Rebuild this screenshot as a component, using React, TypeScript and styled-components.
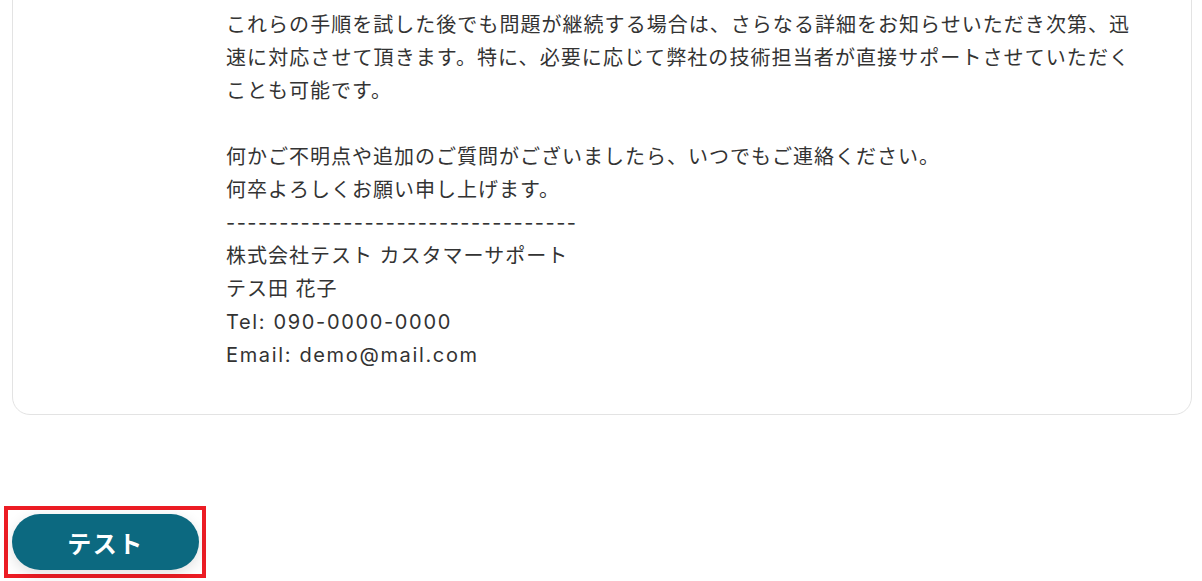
import styled, { createGlobalStyle } from "styled-components";

const GlobalStyle = createGlobalStyle`
  html, body {
    margin: 0;
    padding: 0;
    background: #fff;
    overflow: hidden;
  }
  body {
    font-family: Inter, "Noto Sans CJK JP", sans-serif;
  }
`;

const Page = styled.div`
  width: 1202px;
  height: 581px;
  display: flex;
  flex-direction: column;
  padding: 0 10px 0 12px;
  box-sizing: border-box;
`;

const Card = styled.section`
  margin-top: -24px;
  padding: 32px 61px 42px 213px;
  border: 1px solid #e3e3e3;
  border-radius: 18px;
  background: #fff;
`;

const Body = styled.div`
  font-size: 20px;
  line-height: 33px;
  color: #333;
  white-space: pre-line;
  text-align: justify;
  letter-spacing: 1px;
`;

const Latin = styled.span<{ $tracking?: number }>`
  letter-spacing: ${(p) => p.$tracking ?? 1.65}px;
`;

const Footer = styled.div`
  margin-top: 91px;
  margin-left: -8px;
  display: flex;
`;

const Highlight = styled.div`
  border: 4px solid #ec1c24;
  padding: 4px 3px 4px 4px;
`;

const TestButton = styled.button`
  width: 187px;
  height: 56px;
  border: none;
  border-radius: 28px;
  background: #0c6980;
  color: #fff;
  font-family: Inter, "Noto Sans CJK JP", sans-serif;
  font-size: 24px;
  font-weight: 700;
  letter-spacing: 1.5px;
  box-shadow: 0 4px 14px rgba(0, 0, 0, 0.12);
  cursor: pointer;
`;

const App = () => {
  return (
    <>
      <GlobalStyle />
      <Page>
        <Card>
          <Body>
            {"これらの手順を試した後でも問題が継続する場合は、さらなる詳細をお知らせいただき次第、迅速に対応させて頂きます。特に、必要に応じて弊社の技術担当者が直接サポートさせていただくことも可能です。\n\n"}
            {"何かご不明点や追加のご質問がございましたら、いつでもご連絡ください。\n"}
            {"何卒よろしくお願い申し上げます。\n"}
            <Latin $tracking={1.45}>---------------------------------</Latin>
            {"\n株式会社テスト カスタマーサポート\n"}
            {"テス田 花子\n"}
            <Latin>Tel: 090-0000-0000</Latin>
            {"\n"}
            <Latin>Email: demo@mail.com</Latin>
          </Body>
        </Card>
        <Footer>
          <Highlight>
            <TestButton>テスト</TestButton>
          </Highlight>
        </Footer>
      </Page>
    </>
  );
};

export default App;
